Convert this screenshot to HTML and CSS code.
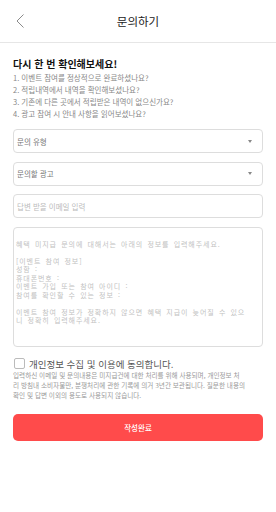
FILE: index.html
```html
<!DOCTYPE html>
<html lang="ko">
<head>
	<meta charset="UTF-8">
	<title>문의하기</title>
	<link rel="stylesheet" href="styles.css">
</head>
<body>

<div class="header">
	<a class="back" href="#">
		<svg width="10" height="16" viewBox="0 0 10 16"><path d="M8.5 1.5L2 8L8.5 14.5" fill="none" stroke="#8a8a8a" stroke-width="1"/></svg>
	</a>
	<h1 class="title">문의하기</h1>
	<span></span>
</div>

<div class="content">
	<h2 class="check-title">다시 한 번 확인해보세요!</h2>
	<ul class="check-list">
		<li>1. 이벤트 참여를 정상적으로 완료하셨나요?</li>
		<li>2. 적립내역에서 내역을 확인해보셨나요?</li>
		<li>3. 기존에 다른 곳에서 적립받은 내역이 없으신가요?</li>
		<li>4. 광고 참여 시 안내 사항을 읽어보셨나요?</li>
	</ul>

	<div class="form">
		<div class="field">문의 유형<i class="caret"></i></div>
		<div class="field">문의할 광고<i class="caret"></i></div>
		<div class="field empty">답변 받을 이메일 입력</div>
		<div class="memo">혜택 미지급 문의에 대해서는 아래의 정보를 입력해주세요.

[이벤트 참여 정보]
성함 :
휴대폰번호 :
이벤트 가입 또는 참여 아이디 :
참여를 확인할 수 있는 정보 :

이벤트 참여 정보가 정확하지 않으면 혜택 지급이 늦어질 수 있으
니 정확히 입력해주세요.</div>
	</div>

	<label class="agree"><span class="box"></span>개인정보 수집 및 이용에 동의합니다.</label>
	<p class="notice">입력하신 이메일 및 문의내용은 미지급건에 대한 처리를 위해 사용되며, 개인정보 처<br>리 방침내 소비자불만, 분쟁처리에 관한 기록에 의거 3년간 보관됩니다. 질문한 내용의<br>확인 및 답변 이외의 용도로 사용되지 않습니다.</p>

	<div class="submit">작성완료</div>
</div>

</body>
</html>
```

FILE: styles.css
```css
body{
	margin: 0;
	background: #fff;
	color: #222;
	font-family: "Noto Sans CJK KR", "Noto Sans", sans-serif;
}
.header{
	height: 42px;
	border-bottom: 1px solid #e6e6e6;
	display: grid;
	grid-template-columns: 40px 1fr 40px;
	align-items: center;
}
.back{
	display: flex;
	justify-content: center;
}
.title{
	margin: 0;
	text-align: center;
	font-size: 11.5px;
	font-weight: normal;
	color: #222;
}

.content{
	padding: 15px 13px 0;
}
.check-title{
	margin: 0;
	font-size: 10px;
	line-height: 12px;
	font-weight: bold;
	color: #111;
}
.check-list{
	list-style: none;
	margin: 1.5px 0 0;
	padding: 0;
	font-size: 7.5px;
	line-height: 12px;
	color: #888;
}

.form{
	margin-top: 9.5px;
	display: flex;
	flex-direction: column;
	gap: 8.5px;
}
.field{
	height: 24px;
	box-sizing: border-box;
	border: 1px solid #ddd;
	border-radius: 4px;
	padding: 0 10px 0 3px;
	display: flex;
	align-items: center;
	justify-content: space-between;
	font-size: 7.5px;
	color: #777;
}
.field.empty{
	color: #bbb;
}
.caret{
	width: 0;
	height: 0;
	border-left: 2.5px solid transparent;
	border-right: 2.5px solid transparent;
	border-top: 3px solid #888;
}
.memo{
	height: 120px;
	box-sizing: border-box;
	border: 1px solid #ddd;
	border-radius: 4px;
	padding: 12px 2px;
	white-space: pre-line;
	font-size: 7px;
	line-height: 8.5px;
	letter-spacing: 0.9px;
	word-spacing: 1.4px;
	color: #c2c2c2;
}

.agree{
	margin-top: 11px;
	display: flex;
	align-items: center;
	gap: 4px;
	font-size: 9.5px;
	line-height: 12px;
	color: #555;
}
.box{
	width: 11px;
	height: 11px;
	margin-left: 1px;
	box-sizing: border-box;
	border: 1px solid #bbb;
	border-radius: 2px;
}
.notice{
	margin: 0;
	font-size: 6.6px;
	line-height: 10px;
	color: #999;
}
.submit{
	margin-top: 14px;
	height: 27px;
	border-radius: 5px;
	background: #ff4b4b;
	color: #fff;
	font-size: 7.5px;
	font-weight: 500;
	display: flex;
	align-items: center;
	justify-content: center;
}
```
